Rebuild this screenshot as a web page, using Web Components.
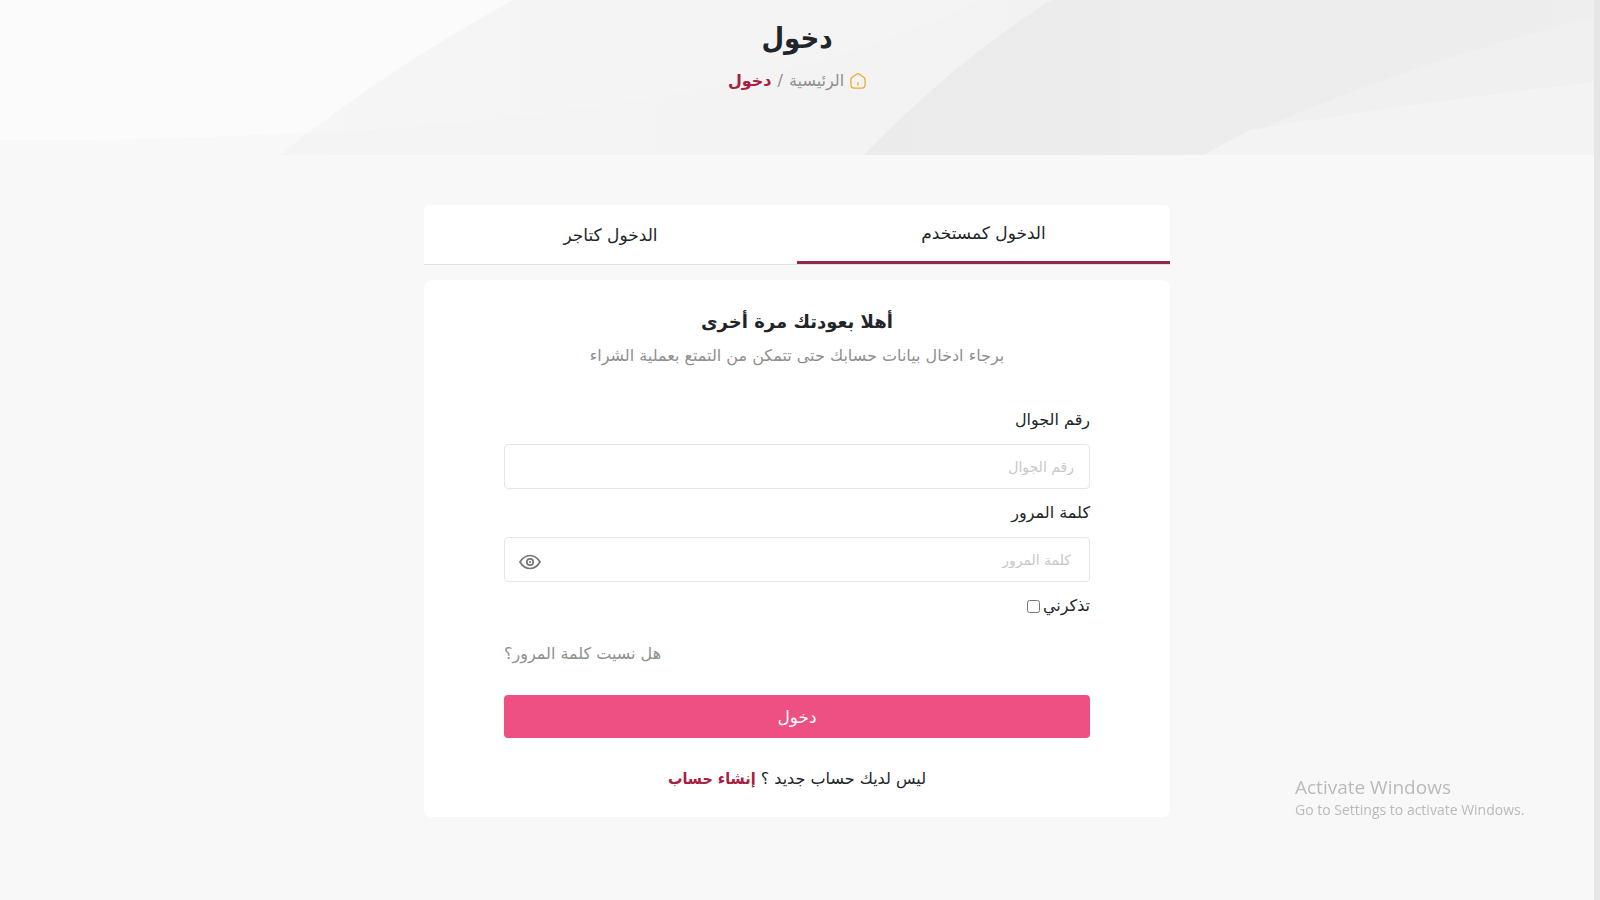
<!DOCTYPE html>
<html lang="ar" dir="rtl">
<head>
<meta charset="utf-8">
<meta name="viewport" content="width=device-width, initial-scale=1">
<title>دخول</title>
<style>
html, body { margin: 0; }
body {
  --ink: #212529;
  --muted: #8f8f8f;
  --brand: #a8203f;
  --pink: #ee5083;
  --condensed: "DejaVu Sans Condensed", "DejaVu Sans", sans-serif;
  background: #f8f8f8;
  color: var(--ink);
  font: 16px/24px "DejaVu Sans", sans-serif;
}
</style>
</head>
<body>
<login-page>
  <page-banner slot="banner" heading="دخول">
    <crumb-trail home="الرئيسية" current="دخول"></crumb-trail>
  </page-banner>
  <tab-switch>
    <tab-item selected>الدخول كمستخدم</tab-item>
    <tab-item>الدخول كتاجر</tab-item>
  </tab-switch>
  <login-card>
    <span slot="title">أهلا بعودتك مرة أخرى</span>
    <span slot="subtitle">برجاء ادخال بيانات حسابك حتى تتمكن من التمتع بعملية الشراء</span>
    <form-field label="رقم الجوال" type="tel"></form-field>
    <form-field label="كلمة المرور" type="password"></form-field>
  </login-card>
  <system-notice slot="notice">
    <span slot="title">Activate Windows</span>
    Go to Settings to activate Windows.
  </system-notice>
</login-page>

<script>
class BaseElement extends HTMLElement {
  connectedCallback() {
    if (this.shadowRoot) return;
    this.attachShadow({ mode: "open" }).innerHTML =
      "<style>*{box-sizing:border-box}a{color:inherit;text-decoration:none}</style>" + this.render();
    this.ready();
  }
  ready() {}
}

customElements.define("login-page", class extends BaseElement {
  render() {
    return `<style>
      :host { display: block; box-sizing: border-box; min-height: 100vh; border-right: 6px solid #e6e6e6; }
      main { width: min(746px, 100% - 32px); margin: 0 auto; padding: 50px 0 64px; display: grid; gap: 15px; }
    </style>
    <slot name="banner"></slot>
    <main><slot></slot></main>
    <slot name="notice"></slot>`;
  }
});

customElements.define("page-banner", class extends BaseElement {
  render() {
    return `<style>
      :host { display: block; position: relative; overflow: hidden; background: #fbfbfb; }
      svg { position: absolute; inset: 0; width: 100%; height: 100%; }
      header { position: relative; display: flex; flex-direction: column; align-items: center; gap: 8px; padding: 16px 0 62px; }
      h1 { margin: 0; font-family: var(--condensed); font-size: 29px; line-height: 45px; font-weight: 700; }
    </style>
    <svg viewBox="0 0 1594 155" preserveAspectRatio="none" aria-hidden="true">
      <defs>
        <linearGradient id="mid" x1="0" x2="1"><stop offset="0" stop-color="#f6f6f6"/><stop offset=".5" stop-color="#f4f4f4"/><stop offset="1" stop-color="#f3f3f3"/></linearGradient>
        <linearGradient id="low" x1="0" x2="1"><stop offset="0" stop-color="#f4f4f4"/><stop offset="1" stop-color="#f2f2f2"/></linearGradient>
        <linearGradient id="dark" x1="0" x2="1"><stop offset="0" stop-color="#ebebeb"/><stop offset="1" stop-color="#eeeeee"/></linearGradient>
      </defs>
      <path fill="#f8f8f8" d="M0 140Q160 141 310 132L290 155H0Z"/>
      <path fill="url(#mid)" d="M513 0Q385 70 280 155H1000L1090 0Z"/>
      <path fill="url(#low)" d="M280 155L306 134Q760 110 980 0H1090L900 155Z"/>
      <path fill="url(#dark)" d="M1051 0Q950 65 864 155H1594V0Z"/>
      <path fill="#f0f0f0" d="M1203 155Q1380 70 1594 17V155Z"/>
      <path fill="#f3f3f3" d="M1203 155L1250 130Q1400 105 1594 82V155Z"/>
    </svg>
    <header><h1>${this.getAttribute("heading")}</h1><slot></slot></header>`;
  }
});

customElements.define("crumb-trail", class extends BaseElement {
  render() {
    return `<style>
      :host { display: block; color: var(--muted); }
      nav { display: flex; align-items: center; gap: 6px; }
      svg { display: block; width: 16px; height: 16px; }
      b { color: var(--brand); }
    </style>
    <nav>
      <svg viewBox="0 0 16 16" fill="none" stroke="#e9ae2f" stroke-width="1.3" stroke-linecap="round" stroke-linejoin="round"><path d="M6.6 1.2 2 4.6Q.9 5.6.9 7v4.8q0 3.3 3.3 3.3h7.6q3.3 0 3.3-3.3V7q0-1.4-1.1-2.4L9.4 1.2Q8 .3 6.6 1.2ZM8 12V9.6"/></svg>
      <a href="#home">${this.getAttribute("home")}</a><span>/</span><b>${this.getAttribute("current")}</b>
    </nav>`;
  }
});

customElements.define("tab-switch", class extends BaseElement {
  render() {
    return `<style>
      :host { display: grid; grid-template-columns: 1fr 1fr; background: #fff; border-radius: 5px 5px 0 0; border-bottom: 1px solid #dee2e6; }
    </style><slot></slot>`;
  }
});

customElements.define("tab-item", class extends BaseElement {
  render() {
    return `<style>
      :host { display: grid; }
      button { height: 59px; padding: 0; border: 0; background: none; color: inherit; font: inherit; font-size: 17px; cursor: pointer; }
      :host([selected]) button { border-bottom: 3px solid #972747; }
    </style><button type="button"><slot></slot></button>`;
  }
});

customElements.define("form-field", class extends BaseElement {
  render() {
    const label = this.getAttribute("label");
    const secret = this.getAttribute("type") === "password";
    return `<style>
      :host { display: block; }
      label { display: block; line-height: 24px; margin-bottom: 12px; }
      .box { display: flex; align-items: center; height: 45px; border: 1px solid #e6e6e6; border-radius: 4px; background: #fff; padding: 0 15px; }
      .box.secret { padding: 0 18px 0 14px; }
      input { flex: 1; min-width: 0; height: 100%; padding: 0; border: 0; outline: 0; background: none; font: inherit; font-size: 14px; color: inherit; text-align: right; direction: rtl; }
      input::placeholder { color: #c8c8c8; opacity: 1; }
      button { border: 0; padding: 0; background: none; display: block; padding-top: 4px; cursor: pointer; }
      svg { display: block; width: 22px; height: 16px; }
    </style>
    <label for="f">${label}</label>
    <div class="box ${secret ? "secret" : ""}">
      <input id="f" type="${this.getAttribute("type")}" placeholder="${label}">
      ${secret ? `<button type="button" aria-label="إظهار"><svg viewBox="0 0 22 16" fill="none" stroke="#777" stroke-width="1.7"><path d="M1 8Q5 1.5 11 1.5T21 8Q17 14.5 11 14.5T1 8Z"/><circle cx="11" cy="8" r="3.2"/><circle cx="11" cy="8" r=".5" stroke-width="1.2"/></svg></button>` : ""}
    </div>`;
  }
  ready() {
    const toggle = this.shadowRoot.querySelector("button");
    const input = this.shadowRoot.querySelector("input");
    toggle?.addEventListener("click", () => { input.type = input.type === "password" ? "text" : "password"; });
  }
});

customElements.define("login-card", class extends BaseElement {
  render() {
    return `<style>
      :host { display: block; background: #fff; border-radius: 8px; padding: 26px 80px; }
      h2, p { margin: 0; text-align: center; }
      h2 { font-size: 18px; line-height: 32px; }
      .sub { color: var(--muted); line-height: 24px; margin: 6px 0 40px; }
      form { display: flex; flex-direction: column; gap: 12px; }
      .remember { display: flex; align-items: center; gap: 3px; align-self: flex-start; }
      input { width: 13px; height: 13px; margin: 0; }
      .forgot { align-self: flex-end; color: var(--muted); margin-top: 12px; }
      button { height: 43px; margin: 17px 0; border: 0; border-radius: 4px; background: var(--pink); color: #fff; font: inherit; font-size: 17px; cursor: pointer; }
      p b { color: var(--brand); font-family: var(--condensed); }
    </style>
    <h2><slot name="title"></slot></h2>
    <p class="sub"><slot name="subtitle"></slot></p>
    <form>
      <slot></slot>
      <div class="remember"><label for="r">تذكرني</label><input type="checkbox" id="r"></div>
      <a class="forgot" href="#forgot">هل نسيت كلمة المرور؟</a>
      <button type="submit">دخول</button>
      <p>ليس لديك حساب جديد ؟ <a href="#register"><b>إنشاء حساب</b></a></p>
    </form>`;
  }
  ready() {
    this.shadowRoot.querySelector("form").addEventListener("submit", e => e.preventDefault());
  }
});

customElements.define("system-notice", class extends BaseElement {
  render() {
    return `<style>
      :host { display: block; position: fixed; right: 69px; bottom: 80px; width: 236px; direction: ltr; color: #bababa; font: 14px/20px "Open Sans", "Noto Sans", sans-serif; white-space: nowrap; }
      strong { display: block; font-weight: 400; font-size: 19px; line-height: 26px; }
    </style><strong><slot name="title"></slot></strong><slot></slot>`;
  }
});
</script>
</body>
</html>
